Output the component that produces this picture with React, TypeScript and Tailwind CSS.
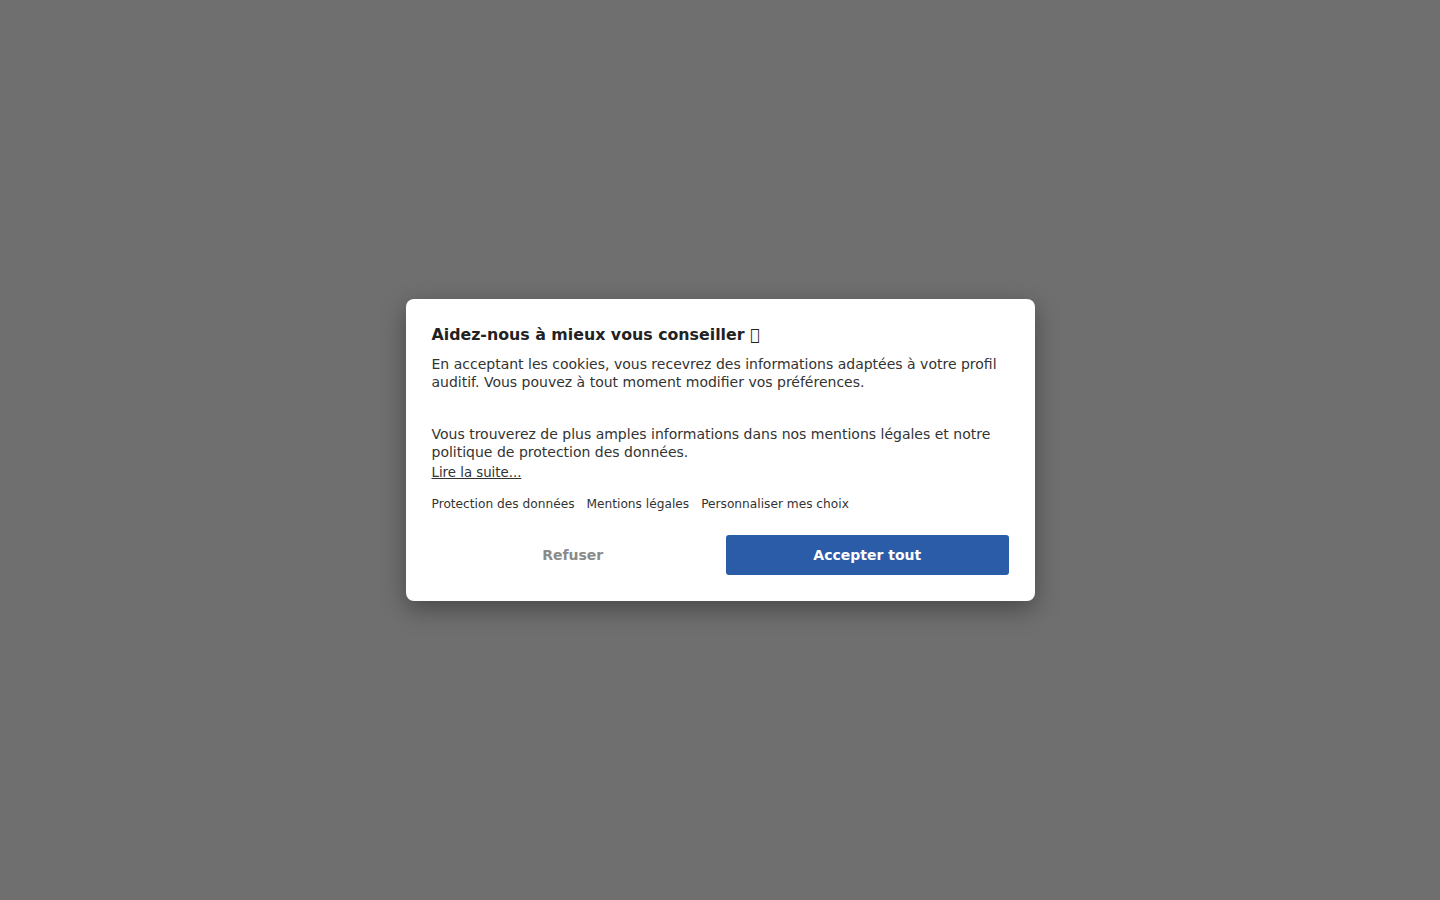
import React from 'react'

export default function App() {
  return (
    <div
      className="min-h-screen w-full bg-[#6f6f6f] flex items-center justify-center"
      style={{ fontFamily: '"DejaVu Sans", "Noto Sans", sans-serif' }}
    >
      <div className="w-[629px] h-[302px] bg-white rounded-[8px] shadow-[0_8px_24px_rgba(0,0,0,0.35)] px-[26px] pt-[24px] pb-[26px] flex flex-col">
        <h2 className="text-[15.8px] leading-[24px] font-bold text-[#222]">
          Aidez-nous à mieux vous conseiller {'\uE000'}
        </h2>
        <p className="mt-[8px] text-[14px] leading-[18px] text-[#333]">
          En acceptant les cookies, vous recevrez des informations adaptées à votre profil
          auditif. Vous pouvez à tout moment modifier vos préférences.
        </p>
        <p className="mt-[34px] text-[14px] leading-[18px] text-[#333]">
          Vous trouverez de plus amples informations dans nos mentions légales et notre
          politique de protection des données.
        </p>
        <a href="#" className="mt-[3px] text-[13.3px] leading-[18px] text-[#333] underline self-start">
          Lire la suite...
        </a>
        <div className="mt-[14px] flex gap-[12px] text-[12.2px] leading-[16px] text-[#333]">
          <a href="#">Protection des données</a>
          <a href="#">Mentions légales</a>
          <a href="#">Personnaliser mes choix</a>
        </div>
        <div className="mt-[23px] grid grid-cols-2 gap-[12px]">
          <button className="h-[40px] text-[14px] font-bold text-[#8a8a8a] bg-white rounded-[3px]">
            Refuser
          </button>
          <button className="h-[40px] text-[14px] font-bold text-white bg-[#2a5ca8] rounded-[3px]">
            Accepter tout
          </button>
        </div>
      </div>
    </div>
  )
}
